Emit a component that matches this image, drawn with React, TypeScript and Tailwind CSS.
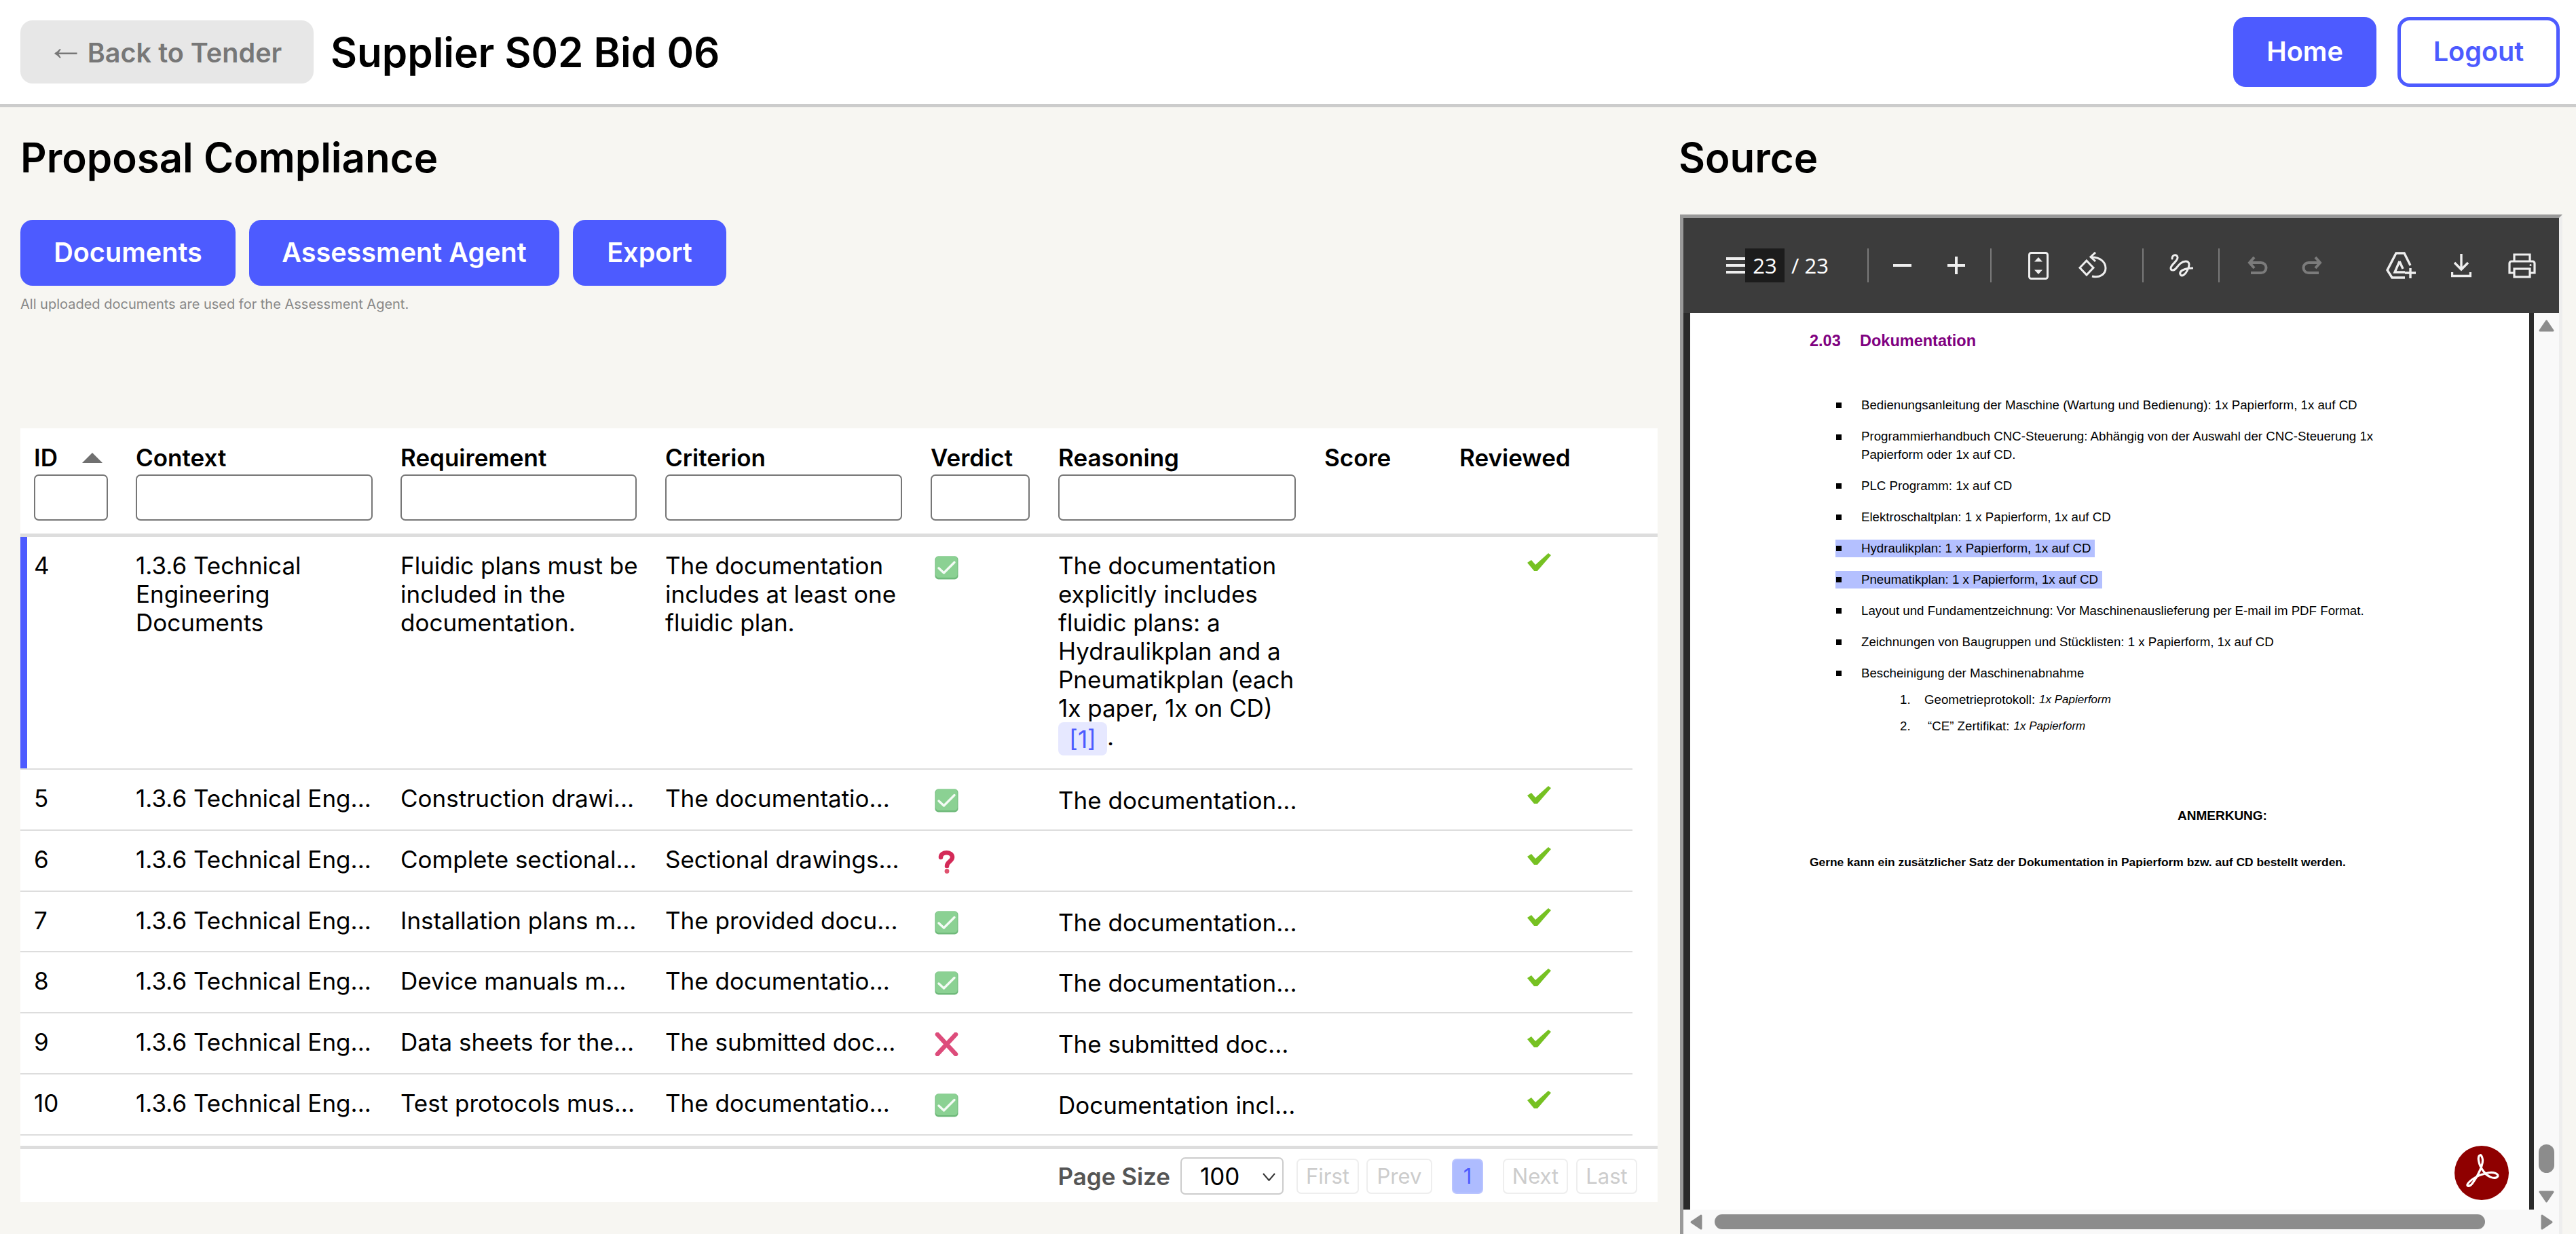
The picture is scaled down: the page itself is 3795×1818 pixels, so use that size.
import type { ReactNode } from 'react';

const GRID = 'grid grid-cols-[150px_390px_390px_391px_188px_392px_199px_275px]';

type Verdict = 'ok' | 'unknown' | 'fail';

const rows: { id: number; requirement: string; criterion: string; verdict: Verdict; reasoning: string }[] = [
  { id: 5, requirement: 'Construction drawi...', criterion: 'The documentatio...', verdict: 'ok', reasoning: 'The documentation...' },
  { id: 6, requirement: 'Complete sectional...', criterion: 'Sectional drawings...', verdict: 'unknown', reasoning: '' },
  { id: 7, requirement: 'Installation plans m...', criterion: 'The provided docu...', verdict: 'ok', reasoning: 'The documentation...' },
  { id: 8, requirement: 'Device manuals m...', criterion: 'The documentatio...', verdict: 'ok', reasoning: 'The documentation...' },
  { id: 9, requirement: 'Data sheets for the...', criterion: 'The submitted doc...', verdict: 'fail', reasoning: 'The submitted doc...' },
  { id: 10, requirement: 'Test protocols mus...', criterion: 'The documentatio...', verdict: 'ok', reasoning: 'Documentation incl...' },
];

function VerdictIcon({ verdict }: { verdict: Verdict }) {
  if (verdict === 'ok') {
    return (
      <svg width="35" height="35" viewBox="0 0 35 35">
        <rect x="0.5" y="0.5" width="34" height="34" rx="5" fill="#6fb97a" />
        <rect x="1.5" y="0.5" width="32" height="31.5" rx="4.5" fill="#8bd193" />
        <path d="M6 18 L13.5 25 L29 9.5" fill="none" stroke="#f4fbf5" strokeWidth="3.4" strokeLinecap="round" strokeLinejoin="round" />
      </svg>
    );
  }
  if (verdict === 'unknown') {
    return (
      <svg width="35" height="35" viewBox="0 0 35 35">
        <path d="M9 11 C9 2 26 2 26 11 C26 17 18 17 18 24" fill="none" stroke="#d42a58" strokeWidth="6.5" strokeLinecap="round" />
        <circle cx="18" cy="31.5" r="3.4" fill="#e0526f" />
      </svg>
    );
  }
  return (
    <svg width="35" height="35" viewBox="0 0 35 35">
      <path d="M4 3 L31 32 M31 3 L4 32" fill="none" stroke="#dd4c7b" strokeWidth="6.5" strokeLinecap="round" />
    </svg>
  );
}

function ReviewedCheck() {
  return (
    <svg width="35" height="26" viewBox="0 0 35 26">
      <polygon points="0,14 6,10 12,17 31,0 35,3 15,26 10,26" fill="#76c122" />
    </svg>
  );
}

function ToolbarSep({ className }: { className: string }) {
  return <div className={`h-[50px] w-[2px] shrink-0 bg-[#7a7a7a] ${className}`} />;
}

function Toolbar() {
  return (
    <div className="flex h-[140px] shrink-0 items-center bg-[#3c3c3c] pl-[63px] font-['Open_Sans',sans-serif] text-[#f0f0f0]">
      <svg className="shrink-0" width="28" height="26" viewBox="0 0 28 26">
        <path d="M0 3 H28 M0 13 H28 M0 23 H28" stroke="#eeeeee" strokeWidth="4" />
      </svg>
      <div className="flex h-[50px] w-[58px] shrink-0 items-center justify-center bg-[#1c1c1c] text-[31px] text-white">23</div>
      <div className="ml-[10px] w-[58px] shrink-0 whitespace-nowrap text-[31px] text-white">/ 23</div>
      <ToolbarSep className="ml-[54px]" />
      <svg className="ml-[36px] shrink-0" width="27" height="4" viewBox="0 0 27 4">
        <rect width="27" height="4" fill="#eeeeee" />
      </svg>
      <svg className="ml-[53px] shrink-0" width="26" height="26" viewBox="0 0 26 26">
        <path d="M0 13 H26 M13 0 V26" stroke="#eeeeee" strokeWidth="4" />
      </svg>
      <ToolbarSep className="ml-[37px]" />
      <svg className="ml-[54px] shrink-0" width="30" height="41" viewBox="0 0 30 41">
        <rect x="1.5" y="1.5" width="27" height="38" rx="3" fill="none" stroke="#eeeeee" strokeWidth="3" />
        <path d="M15 8 L9 14.5 H21 Z M9 26.5 H21 L15 33 Z" fill="#eeeeee" />
      </svg>
      <svg className="ml-[44px] shrink-0" width="42" height="41" viewBox="0 0 42 41" fill="none" stroke="#eeeeee" strokeWidth="3">
        <path d="M12 13 L22 23.5 L12 34 L2 23.5 Z" />
        <path d="M20 8 C32 8 40 15 40 24 C40 33 31 39 20 36" />
        <path d="M25 1 L18 7.5 L25 14" />
      </svg>
      <ToolbarSep className="ml-[52px]" />
      <svg className="ml-[37px] shrink-0" width="36" height="36" viewBox="0 0 36 36" fill="none">
        <path d="M5 8 C5 2 12 1 13 6 C14 11 3 17 3 22 C3 26 8 26 11 22 C15 17 19 12 25 12 C31 12 31 18 28 24 C25 31 19 36 17 31 C15 26 24 22 35 22" stroke="#eeeeee" strokeWidth="3" strokeLinecap="round" />
      </svg>
      <ToolbarSep className="ml-[37px]" />
      <svg className="ml-[41px] shrink-0" width="30" height="28" viewBox="0 0 30 28" fill="none" stroke="#7b7b7b" strokeWidth="4">
        <path d="M10 2 L3 10 L10 18" />
        <path d="M3 10 H20 A7.5 7.5 0 0 1 20 25 H5" />
      </svg>
      <svg className="ml-[50px] shrink-0" width="30" height="28" viewBox="0 0 30 28" fill="none" stroke="#7b7b7b" strokeWidth="4">
        <path d="M20 2 L27 10 L20 18" />
        <path d="M27 10 H10 A7.5 7.5 0 0 0 10 25 H25" />
      </svg>
      <svg className="ml-[94px] shrink-0" width="44" height="40" viewBox="0 0 44 40" fill="none" stroke="#eeeeee" strokeWidth="3.4">
        <path d="M36 20 L27 2 H15 L2 27 L9 38 H28" />
        <path d="M20 14 L13 30 H28 M20 14 L25 25" />
        <path d="M36 24 V39 M28 31 H44" />
      </svg>
      <svg className="ml-[52px] shrink-0" width="30" height="36" viewBox="0 0 30 36" fill="none" stroke="#eeeeee" strokeWidth="3.4">
        <path d="M15 1 V23 M5 14 L15 24 L25 14" />
        <path d="M1.5 28 V33.5 H28.5 V28" />
      </svg>
      <svg className="ml-[54px] shrink-0" width="41" height="37" viewBox="0 0 41 37" fill="none" stroke="#eeeeee" strokeWidth="3.2">
        <path d="M9 12 V2 H32 V12" />
        <path d="M9 29 H2 V15 A3 3 0 0 1 5 12 H36 A3 3 0 0 1 39 15 V29 H32" />
        <rect x="9" y="23" width="23" height="12" />
        <circle cx="33" cy="17.5" r="1.5" fill="#eeeeee" stroke="none" />
      </svg>
    </div>
  );
}

function Bullet({ children, highlight }: { children: ReactNode; highlight?: 'hydraulik' | 'pneumatik' }) {
  const hl = highlight === 'hydraulik' ? 'w-[382px] bg-[#b4c0ff]' : highlight === 'pneumatik' ? 'w-[393px] bg-[#b4c0ff]' : '';
  return (
    <div className="flex min-h-[46px] items-center pl-[38px]">
      <div className={`flex h-[26px] items-center ${hl}`}>
        <span className="ml-[1px] h-[8px] w-[8px] shrink-0 bg-black" />
        <span className="ml-[29px] whitespace-nowrap">{children}</span>
      </div>
    </div>
  );
}

function PdfPage() {
  return (
    <div className="relative flex-1 bg-white pl-[176px] font-['Liberation_Sans',Arial,sans-serif] text-[18.7px] text-black">
      <div className="flex h-[84px] items-center text-[23.5px] font-bold text-[#800080]">
        <span className="w-[74px]">2.03</span>
        <span>Dokumentation</span>
      </div>
      <div className="h-[29px]" />
      <Bullet>Bedienungsanleitung der Maschine (Wartung und Bedienung): 1x Papierform, 1x auf CD</Bullet>
      <div className="flex h-[73px] items-center pl-[38px] leading-[26.6px]">
        <span className="mb-[26px] ml-[1px] h-[8px] w-[8px] shrink-0 bg-black" />
        <span className="ml-[29px] whitespace-nowrap">
          Programmierhandbuch CNC-Steuerung: Abhängig von der Auswahl der CNC-Steuerung 1x
          <br />
          Papierform oder 1x auf CD.
        </span>
      </div>
      <Bullet>PLC Programm: 1x auf CD</Bullet>
      <Bullet>Elektroschaltplan: 1 x Papierform, 1x auf CD</Bullet>
      <Bullet highlight="hydraulik">Hydraulikplan: 1 x Papierform, 1x auf CD</Bullet>
      <Bullet highlight="pneumatik">Pneumatikplan: 1 x Papierform, 1x auf CD</Bullet>
      <Bullet>Layout und Fundamentzeichnung: Vor Maschinenauslieferung per E-mail im PDF Format.</Bullet>
      <Bullet>Zeichnungen von Baugruppen und Stücklisten: 1 x Papierform, 1x auf CD</Bullet>
      <Bullet>Bescheinigung der Maschinenabnahme</Bullet>
      <div className="flex h-[32px] items-center pl-[133px] whitespace-nowrap">
        <span className="w-[36px] shrink-0">1.</span>
        Geometrieprotokoll: <i className="ml-[6px] text-[17px]">1x Papierform</i>
      </div>
      <div className="flex h-[46px] items-center pl-[133px] whitespace-nowrap">
        <span className="w-[41px] shrink-0">2.</span>
        “CE” Zertifikat: <i className="ml-[6px] text-[17px]">1x Papierform</i>
      </div>
      <div className="mt-[89px] flex h-[40px] items-center pl-[542px] text-[19px] font-bold">ANMERKUNG:</div>
      <div className="mt-[28px] flex h-[40px] items-center text-[17.4px] font-bold whitespace-nowrap">
        Gerne kann ein zusätzlicher Satz der Dokumentation in Papierform bzw. auf CD bestellt werden.
      </div>
      {/* floating acrobat badge */}
      <svg className="absolute right-[30px] bottom-[14px]" width="80" height="80" viewBox="0 0 80 80">
        <circle cx="40" cy="40" r="40" fill="#8f0000" />
        <path
          d="M38 14 C33 14 35 28 43 38 C48 45 58 50 63 46 C67 42 58 37 45 41 C35 43 22 51 19 57 C18 61 24 60 28 53 C34 45 44 26 41 18 C40 14 38 13 38 14 Z"
          fill="none"
          stroke="#ffffff"
          strokeWidth="3.2"
        />
      </svg>
    </div>
  );
}

function PdfViewer() {
  return (
    <div className="mt-[49px] flex min-h-0 flex-1 flex-col border-t-[5px] border-r-[5px] border-l-[5px] border-t-[#999999] border-r-[#eeeeee] border-l-[#999999]">
      <Toolbar />
      <div className="flex min-h-0 flex-1">
        <div className="w-[10px] shrink-0 bg-[#2a2a2a]" />
        <PdfPage />
        <div className="w-[7px] shrink-0 bg-[#2a2a2a]" />
        <div className="flex w-[37px] shrink-0 flex-col items-center bg-[#f9f9f9] pt-[10px] pb-[10px]">
          <svg width="23" height="18" viewBox="0 0 23 18">
            <path d="M11.5 2 L21 16 H2 Z" fill="#8c8c8c" stroke="#8c8c8c" strokeWidth="3" strokeLinejoin="round" />
          </svg>
          <div className="mt-auto h-[42px] w-[23px] rounded-full bg-[#8c8c8c]" />
          <svg className="mt-[26px]" width="23" height="18" viewBox="0 0 23 18">
            <path d="M2 2 H21 L11.5 16 Z" fill="#8c8c8c" stroke="#8c8c8c" strokeWidth="3" strokeLinejoin="round" />
          </svg>
        </div>
      </div>
      <div className="flex h-[36px] shrink-0 items-center bg-[#f9f9f9] pl-[10px]">
        <svg width="18" height="23" viewBox="0 0 18 23">
          <path d="M2 11.5 L16 2 V21 Z" fill="#8c8c8c" stroke="#8c8c8c" strokeWidth="3" strokeLinejoin="round" />
        </svg>
        <div className="ml-[18px] h-[22px] w-[1135px] rounded-full bg-[#8c8c8c]" />
        <svg className="ml-[82px]" width="18" height="23" viewBox="0 0 18 23">
          <path d="M16 11.5 L2 2 V21 Z" fill="#8c8c8c" stroke="#8c8c8c" strokeWidth="3" strokeLinejoin="round" />
        </svg>
      </div>
    </div>
  );
}

function ColumnHead({ label, filter, inputWidth, sort }: { label: string; filter?: boolean; inputWidth?: string; sort?: boolean }) {
  return (
    <div className="pl-[20px]">
      <div className="flex h-[38px] items-center gap-[36px] font-semibold">
        {label}
        {sort && (
          <svg width="30" height="15" viewBox="0 0 30 15">
            <polygon points="15,0 30,15 0,15" fill="#707070" />
          </svg>
        )}
      </div>
      {filter && <input className={`mt-[6px] block h-[68px] rounded-[7px] border-[2.4px] border-[#767676] bg-white ${inputWidth}`} />}
    </div>
  );
}

function PagerButton({ label, className }: { label: string; className: string }) {
  return <button className={`h-[52px] rounded-[7px] border-[2.4px] border-[#eeeeee] bg-white text-[#cccccc] ${className}`}>{label}</button>;
}

function TableCard() {
  return (
    <div className="mt-[171px] h-[1140px] w-[2412px] bg-white text-[35px] text-black">
      <div className={`${GRID} h-[160px] border-b-[5px] border-[#dddddd] pt-[24px]`}>
        <ColumnHead label="ID" filter inputWidth="w-[109px]" sort />
        <ColumnHead label="Context" filter inputWidth="w-[349px]" />
        <ColumnHead label="Requirement" filter inputWidth="w-[348px]" />
        <ColumnHead label="Criterion" filter inputWidth="w-[349px]" />
        <ColumnHead label="Verdict" filter inputWidth="w-[146px]" />
        <ColumnHead label="Reasoning" filter inputWidth="w-[350px]" />
        <ColumnHead label="Score" />
        <ColumnHead label="Reviewed" />
      </div>

      <div className="w-[2375px]">
        {/* selected row */}
        <div className={`${GRID} h-[343px] border-b-[2.4px] border-[#dddddd] leading-[42px] shadow-[inset_10px_0_0_#4d5bff]`}>
          <div className="pt-[21px] pl-[20px]">4</div>
          <div className="pt-[21px] pl-[20px]">1.3.6 Technical<br />Engineering<br />Documents</div>
          <div className="pt-[21px] pl-[20px]">Fluidic plans must be<br />included in the<br />documentation.</div>
          <div className="pt-[21px] pl-[20px]">The documentation<br />includes at least one<br />fluidic plan.</div>
          <div className="pt-[28px] pl-[26px]"><VerdictIcon verdict="ok" /></div>
          <div className="pt-[21px] pl-[20px]">
            The documentation
            <br />
            explicitly includes
            <br />
            fluidic plans: a
            <br />
            Hydraulikplan and a
            <br />
            Pneumatikplan (each
            <br />
            1x paper, 1x on CD)
            <br />
            <span className="inline-flex h-[49px] w-[72px] items-center justify-center rounded-[8px] bg-[#e6e8ff] align-middle text-[#4d5bff]">[1]</span>
            <span>.</span>
          </div>
          <div />
          <div className="flex justify-center pt-[24px]"><ReviewedCheck /></div>
        </div>

        {rows.map((r) => (
          <div key={r.id} className={`${GRID} h-[89.8px] border-b-[2.4px] border-[#dddddd] leading-[42px]`}>
            <div className="pt-[21px] pl-[20px]">{r.id}</div>
            <div className="pt-[21px] pl-[20px] whitespace-nowrap">1.3.6 Technical Eng...</div>
            <div className="pt-[21px] pl-[20px] whitespace-nowrap">{r.requirement}</div>
            <div className="pt-[21px] pl-[20px] whitespace-nowrap">{r.criterion}</div>
            <div className="pt-[28px] pl-[26px]"><VerdictIcon verdict={r.verdict} /></div>
            <div className="pt-[24px] pl-[20px] whitespace-nowrap">{r.reasoning}</div>
            <div />
            <div className="flex justify-center pt-[24px]"><ReviewedCheck /></div>
          </div>
        ))}
      </div>

      <div className="mt-[15px] flex h-[85px] items-center justify-end border-t-[5px] border-[#dddddd] pr-[30px] text-[31px]">
        <span className="text-[35px] font-semibold text-[#555555]">Page Size</span>
        <div className="relative ml-[15px] h-[55px] w-[152px]">
          <select className="h-full w-full appearance-none rounded-[7px] border-[2.4px] border-[#cccccc] bg-white pl-[27px] text-[35px] text-black">
            <option>100</option>
          </select>
          <svg className="pointer-events-none absolute top-[23px] right-[12px]" width="19" height="12" viewBox="0 0 19 12">
            <path d="M1 1 L9.5 11 L18 1" fill="none" stroke="#333333" strokeWidth="2" />
          </svg>
        </div>
        <PagerButton className="ml-[19px] w-[92px]" label="First" />
        <PagerButton className="ml-[11px] w-[97px]" label="Prev" />
        <button className="ml-[29px] h-[52px] w-[46px] rounded-[7px] border-[2.4px] border-[#b9c4ff] bg-[#aebcff] text-[#4d5bff]">1</button>
        <PagerButton className="ml-[29px] w-[96px]" label="Next" />
        <PagerButton className="ml-[12px] w-[90px]" label="Last" />
      </div>
    </div>
  );
}

export default function App() {
  return (
    <div className="flex h-[1818px] w-[3795px] flex-col overflow-hidden bg-[#f7f6f2] font-[Inter,sans-serif]">
      <header className="flex h-[158px] shrink-0 items-center border-b-[5px] border-[#cccccc] bg-white pr-[24px] pl-[30px]">
        <button className="h-[93px] w-[432px] rounded-[18px] bg-[#e7e7e7] pr-[8px] text-[39.6px] font-semibold whitespace-nowrap text-[#777777]">
          <span className="mr-[4px] inline-block -translate-y-[4px] font-['Liberation_Sans',sans-serif] text-[56px] leading-none font-normal">←</span>
          Back to Tender
        </button>
        <h1 className="ml-[25px] text-[60px] font-semibold text-black">Supplier S02 Bid 06</h1>
        <button className="ml-auto h-[103px] w-[211px] rounded-[18px] bg-[#4d5bff] text-[39.6px] font-semibold text-white">Home</button>
        <button className="ml-[31px] h-[103px] w-[239px] rounded-[18px] border-[5px] border-[#4d5bff] bg-white text-[39.6px] font-semibold text-[#4d5bff]">Logout</button>
      </header>

      <main className="flex min-h-0 flex-1 pl-[30px]">
        <section className="w-[2412px] shrink-0 pt-[39px]">
          <h2 className="h-[70px] text-[60px] leading-[70px] font-semibold text-black">Proposal Compliance</h2>
          <div className="mt-[57px] flex gap-[20px]">
            <button className="h-[97px] w-[317px] rounded-[18px] bg-[#4d5bff] text-[39.6px] font-semibold text-white">Documents</button>
            <button className="h-[97px] w-[457px] rounded-[18px] bg-[#4d5bff] text-[39.6px] font-semibold text-white">Assessment Agent</button>
            <button className="h-[97px] w-[226px] rounded-[18px] bg-[#4d5bff] text-[39.6px] font-semibold text-white">Export</button>
          </div>
          <p className="mt-[15px] text-[20px] leading-[24px] text-[#888888]">All uploaded documents are used for the Assessment Agent.</p>
          <TableCard />
        </section>

        <section className="ml-[33px] flex w-[1300px] shrink-0 flex-col pt-[39px]">
          <h2 className="-ml-[2px] h-[70px] text-[60px] leading-[70px] font-semibold text-black">Source</h2>
          <PdfViewer />
        </section>
      </main>
    </div>
  );
}
